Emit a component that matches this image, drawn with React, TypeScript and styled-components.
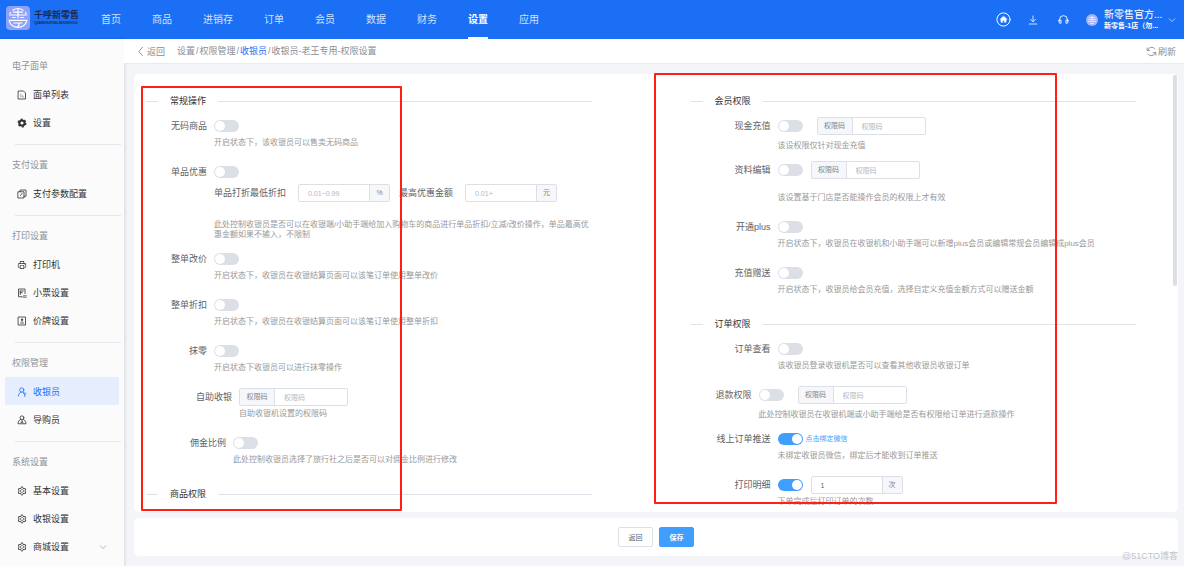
import React, { useId } from "react";
import styled, { createGlobalStyle, css } from "styled-components";
import { AiOutlineSetting, AiOutlinePrinter } from "react-icons/ai";

const GlobalStyle = createGlobalStyle`
  * { box-sizing: border-box; }
  body { margin: 0; }
  body, button, input {
    font-family: "Liberation Sans", "Noto Sans CJK SC", sans-serif;
  }
`;

const Shell = styled.div`
  position: relative;
  display: flex;
  flex-direction: column;
  height: 100vh;
  overflow: hidden;
  background: #f4f5f8;
  color: #606266;
  font-size: 9px;
  line-height: 14px;
`;

/* ---------- top bar ---------- */

const TopBar = styled.header`
  display: flex;
  align-items: center;
  flex: none;
  height: 39px;
  padding: 0 8px 0 6px;
  background: #1b6ff5;
  color: #fff;
`;

const Brand = styled.a`
  display: flex;
  align-items: center;
  gap: 4px;
  width: 95px;
  padding-bottom: 4px;
  color: #1d2a4d;
  text-decoration: none;
`;

const BrandText = styled.span`
  display: flex;
  flex-direction: column;
  font-weight: 700;
`;

const BrandName = styled.span`
  font-size: 9px;
  line-height: 10px;
`;

const BrandLatin = styled.span`
  font-size: 4px;
  line-height: 5px;
`;

const Nav = styled.nav`
  display: flex;
  flex: 1;
  gap: 31px;
  height: 100%;
`;

const NavLink = styled.a<{ $active?: boolean }>`
  display: flex;
  align-items: center;
  padding-top: 2px;
  border-bottom: 2px solid ${(p) => (p.$active ? "#fff" : "transparent")};
  color: ${(p) => (p.$active ? "#fff" : "#d3e2fd")};
  font-size: 10px;
  font-weight: ${(p) => (p.$active ? 700 : 400)};
  text-decoration: none;
`;

const Tools = styled.div`
  display: flex;
  align-items: center;
`;

const ToolButton = styled.button`
  display: flex;
  justify-content: center;
  width: 30px;
  padding: 0;
  border: 0;
  background: none;
  color: #fff;
`;

const Account = styled.button`
  display: flex;
  align-items: center;
  gap: 6px;
  margin-left: 8px;
  padding: 0;
  border: 0;
  background: none;
  color: #fff;
  text-align: left;
`;

const AccountText = styled.span`
  display: flex;
  flex-direction: column;
  width: 58px;
  white-space: nowrap;
`;

const AccountName = styled.span`
  font-size: 10px;
  line-height: 12px;
`;

const AccountShop = styled.span`
  font-size: 7px;
  font-weight: 700;
  line-height: 10px;
`;

/* ---------- sidebar ---------- */

const Body = styled.div`
  display: flex;
  flex: 1;
  min-height: 0;
`;

const Sidebar = styled.aside`
  flex: none;
  width: 124px;
  padding-top: 11px;
  overflow: hidden;
  background: #fbfbfb;
  box-shadow: 1px 0 3px rgba(0, 0, 0, 0.12);
`;

const Group = styled.section`
  &:not(:last-child)::after {
    content: "";
    display: block;
    height: 1px;
    margin: 8px 3px 4px 15px;
    background: #e6e7ea;
  }
`;

const GroupTitle = styled.h2`
  height: 30px;
  margin: 0;
  padding: 2px 0 0 12px;
  color: #909399;
  font-size: 9px;
  font-weight: 400;
  line-height: 28px;
`;

const MenuLink = styled.a<{ $active?: boolean }>`
  display: flex;
  align-items: center;
  gap: 6px;
  height: 28px;
  margin: 0 5px;
  padding: 1px 12px 0;
  border-radius: 2px;
  background: ${(p) => (p.$active ? "#e6edfc" : "transparent")};
  color: ${(p) => (p.$active ? "#1b6ff5" : "#303133")};
  text-decoration: none;

  & > span {
    flex: 1;
  }
  & > span + svg {
    color: #909399;
  }
`;

/* ---------- main ---------- */

const Main = styled.main`
  display: flex;
  flex: 1;
  flex-direction: column;
  min-width: 0;
`;

const CrumbBar = styled.div`
  display: flex;
  align-items: center;
  flex: none;
  height: 25px;
  padding: 0 8px 0 14px;
  border-bottom: 1px solid #e8eaee;
  background: #fff;
  color: #8a8d93;
`;

const PlainButton = styled.button<{ $gap?: number }>`
  display: flex;
  align-items: center;
  gap: ${(p) => p.$gap ?? 0}px;
  padding: 0;
  border: 0;
  background: none;
  color: inherit;
  font-size: 9px;
`;

const Crumbs = styled.nav`
  display: flex;
  flex: 1;
  gap: 1px;
  margin-left: 12px;
`;

const Crumb = styled.a<{ $strong?: boolean }>`
  color: ${(p) => (p.$strong ? "#1b6ff5" : "inherit")};
  text-decoration: none;
`;

const Content = styled.div`
  display: flex;
  flex: 1;
  flex-direction: column;
  gap: 6px;
  min-height: 0;
  padding: 10px 6px 10px 10px;
`;

const Card = styled.div`
  display: flex;
  flex: 1;
  min-height: 0;
  padding-bottom: 7px;
  border-radius: 5px;
  background: #fff;
`;

const Columns = styled.form`
  display: grid;
  flex: 1;
  grid-template-columns: 1fr 1fr;
  align-items: start;
  column-gap: 99px;
  padding: 13px 37px 0 12px;
  overflow-y: auto;
  scrollbar-width: none;
`;

const Column = styled.div`
  display: flex;
  flex-direction: column;
`;

const ScrollThumb = styled.div`
  flex: none;
  width: 4px;
  height: 49%;
  margin: 1px 1px 0 0;
  border-radius: 2px;
  background: #dddee0;
`;

const ActionBar = styled.div`
  display: flex;
  align-items: center;
  justify-content: center;
  flex: none;
  gap: 6px;
  height: 38px;
  border-radius: 5px;
  background: #fff;
`;

const ActionButton = styled.button<{ $primary?: boolean }>`
  width: 35px;
  height: 20px;
  padding: 0;
  border: 1px solid ${(p) => (p.$primary ? "#409eff" : "#dcdfe6")};
  border-radius: 2px;
  background: ${(p) => (p.$primary ? "#409eff" : "#fff")};
  color: ${(p) => (p.$primary ? "#fff" : "#606266")};
  font-size: 7px;
  font-weight: ${(p) => (p.$primary ? 700 : 400)};
`;

/* ---------- form parts ---------- */

const SectionTitle = styled.h3`
  display: flex;
  align-items: center;
  gap: 12px;
  height: 14px;
  margin: 7px 0 9px;
  color: #303133;
  font-size: 9px;
  font-weight: 400;

  &::before,
  &::after {
    content: "";
    width: 12px;
    height: 1px;
    background: #dfe2e8;
  }
  &::after {
    flex: 1;
  }
`;

const Item = styled.div<{ $label: number; $tight?: boolean }>`
  display: grid;
  grid-template-columns: ${(p) => p.$label}px 1fr;
  margin-bottom: ${(p) => (p.$tight ? 10 : 15)}px;
`;

const ItemLabel = styled.label`
  padding-right: 7px;
  line-height: 18px;
  text-align: right;
  white-space: nowrap;
`;

const Controls = styled.div<{ $gap?: number }>`
  display: flex;
  align-items: center;
  gap: ${(p) => p.$gap ?? 0}px;
  height: 18px;
`;

const Hint = styled.p<{ $top?: number }>`
  grid-column: 2;
  margin: ${(p) => p.$top ?? 3}px 0 0;
  color: #999;
  font-size: 8px;
  line-height: 10px;
`;

const Switch = styled.input.attrs({ type: "checkbox", role: "switch" })`
  appearance: none;
  display: flex;
  justify-content: flex-start;
  width: 25px;
  height: 12px;
  margin: 0;
  padding: 1px;
  border-radius: 6px;
  background: #dcdfe6;

  &::before {
    content: "";
    width: 10px;
    height: 10px;
    border-radius: 50%;
    background: #fff;
  }
  &:checked {
    justify-content: flex-end;
    background: #409eff;
  }
`;

const SubRow = styled.div`
  display: flex;
  grid-column: 2;
  align-items: center;
  gap: 12px;
  height: 18px;
  margin-top: 3px;
  white-space: nowrap;

  & > :nth-child(3) {
    margin-left: -3px;
  }
`;

const Field = styled.span`
  display: flex;
  height: 18px;
  overflow: hidden;
  border: 1px solid #dcdfe6;
  border-radius: 2px;
  background: #fff;
`;

const addonEdge = {
  start: css`
    width: 35px;
    border-right: 1px solid #dcdfe6;
  `,
  end: css`
    width: 20px;
    border-left: 1px solid #dcdfe6;
  `,
};

const Addon = styled.span<{ $side: "start" | "end" }>`
  display: flex;
  align-items: center;
  justify-content: center;
  background: #f5f7fa;
  color: #80848c;
  font-size: 7px;
  ${(p) => addonEdge[p.$side]}
`;

const TextInput = styled.input<{ $short?: boolean }>`
  width: ${(p) => (p.$short ? 70 : 72)}px;
  padding: 0 9px;
  border: 0;
  outline: 0;
  background: none;
  color: #606266;
  font-size: 7px;

  &::placeholder {
    color: #b4b8c0;
  }
`;

const BindLink = styled.a`
  margin-left: 3px;
  color: #409eff;
  font-size: 7px;
  text-decoration: none;
`;

/* ---------- annotations ---------- */

const Marker = styled.div`
  position: absolute;
  border: 2px solid #ff1f14;
  border-radius: 1px;
  pointer-events: none;
`;

const LeftMarker = styled(Marker)`
  top: 86px;
  left: 141px;
  width: 261px;
  height: 425px;
`;

const RightMarker = styled(Marker)`
  top: 73px;
  left: 654px;
  width: 403px;
  height: 431px;
`;

const Watermark = styled.div`
  position: absolute;
  right: 6px;
  bottom: 3px;
  color: #c3c4c8;
  font-size: 9px;
`;

/* ---------- icons ---------- */

const Svg = ({ size = 10, children }: { size?: number; children: React.ReactNode }) => (
  <svg
    width={size}
    height={size}
    viewBox="0 0 20 20"
    fill="none"
    stroke="currentColor"
    strokeWidth="1.6"
    strokeLinecap="round"
    strokeLinejoin="round"
    aria-hidden="true"
  >
    {children}
  </svg>
);

const LogoMark = () => (
  <svg width="24" height="24" viewBox="0 0 24 24" fill="none" stroke="#fff" aria-hidden="true">
    <rect width="24" height="24" rx="4" fill="#8ea2fb" stroke="none" />
    <path
      d="M6.500 4.500A9.400 9.400 0 0 1 17.500 4.500M3.500 8.200A9.400 9.400 0 0 1 5 6M20.500 8.200A9.400 9.400 0 0 0 19 6M3 14.500a9.400 9.400 0 0 0 9 6.900 9.400 9.400 0 0 0 9-6.900"
      strokeWidth="1.100"
    />
    <path
      d="M7 6.200h10M3.200 9h17.600M12 3.200v9.300M6.200 11.500h3.600M14.200 11.500h3.600M2.800 14.300h18.400M7.500 17h9M12.500 17c1 1.800.2 3.200-1.500 4.200"
      strokeWidth="1.200"
    />
  </svg>
);

const DocIcon = () => (
  <Svg>
    <path d="M3 2h10l4 4v12H3z" />
    <path d="M7.500 8v6M10.500 11v3h3" strokeWidth="1.100" strokeOpacity="0.7" />
  </Svg>
);
const SolidGear = () => (
  <svg width="10" height="10" viewBox="0 0 20 20" fill="none" stroke="currentColor" aria-hidden="true">
    <circle cx="10" cy="10" r="5.200" strokeWidth="4" />
    <circle cx="10" cy="10" r="7.600" strokeWidth="2.600" strokeDasharray="4.200 3.760" />
  </svg>
);
const CopyIcon = () => (
  <Svg>
    <path d="M2.500 5.500h11.500V18H2.500z M6 5.500V2h12v12.500h-4" />
    <path d="M10.500 8.500L7 13" />
  </Svg>
);
const TicketIcon = () => (
  <Svg>
    <path d="M16 11V2H3v15.500h8M6.500 6h6M6.500 9.500h4M6.500 6v7" />
    <path d="M13 15.500h5.500M13 18.500h5.500" strokeWidth="1.400" />
  </Svg>
);
const PriceIcon = () => (
  <Svg>
    <path d="M3 2h14v16H3z M10 6v5M7 14h6" />
    <circle cx="10" cy="7.500" r="1.200" fill="currentColor" />
  </Svg>
);
const CashierIcon = () => (
  <Svg>
    <circle cx="9.500" cy="6" r="4.200" />
    <path d="M2.500 18c.3-4 2.700-7 6-7.500M12 10.500c1.500.3 2.500.8 3.500 1.500M13 12.500l2.500 3 2.500-3M15.500 15.500V19" />
  </Svg>
);
const GuideIcon = () => (
  <Svg>
    <circle cx="10" cy="5.500" r="3.800" />
    <path d="M7 9c-3 1.500-4.500 4-5 8.500h16c-.5-4.500-2-7-5-8.500M10 10.500v4M8 14.500h4" />
  </Svg>
);
const ChevronDown = () => (
  <Svg size={8}>
    <path d="M3 7l7 7 7-7" />
  </Svg>
);
const ChevronLeft = () => (
  <svg width="9" height="11" viewBox="0 0 18 22" fill="none" stroke="currentColor" strokeWidth="1.800" aria-hidden="true">
    <path d="M9.500 2L1.500 11l8 9" />
  </svg>
);
const HomeIcon = () => (
  <Svg size={15}>
    <circle cx="10" cy="10" r="8.800" strokeWidth="1.300" />
    <path
      d="M10 5.500l-4.800 4.300h1.300v4h2.400v-2.600h2.200v2.600h2.400v-4h1.300z"
      fill="currentColor"
      strokeWidth="0.500"
    />
  </Svg>
);
const DownloadIcon = () => (
  <Svg size={10}>
    <path d="M10 2v11M5 8.500l5 5 5-5M2.500 18h15" />
  </Svg>
);
const HeadsetIcon = () => (
  <Svg size={11}>
    <path d="M3 13V10a7 7 0 0 1 14 0v3" />
    <path d="M2 11h3.500v6H4a2 2 0 0 1-2-2zM18 11h-3.500v6H16a2 2 0 0 0 2-2z" />
  </Svg>
);
const RefreshIcon = () => (
  <Svg size={11}>
    <path d="M3 8a7.500 7.500 0 0 1 13.500-2.500M17 12a7.500 7.500 0 0 1-13.500 2.500" />
    <path d="M2 3.500V8h4.500M18 16.500V12h-4.500" />
  </Svg>
);
const Avatar = () => (
  <svg width="12" height="12" viewBox="0 0 24 24" stroke="#fff" fill="none" aria-hidden="true">
    <circle cx="12" cy="12" r="12" fill="#a9b3f6" stroke="none" />
    <path d="M6 7h12M4 11h16M12 4v11M4 15h16M8 19h8" strokeWidth="1.600" strokeOpacity="0.800" />
  </svg>
);

/* ---------- data ---------- */

const navItems = ["首页", "商品", "进销存", "订单", "会员", "数据", "财务", "设置", "应用"];

type MenuEntry = { text: string; icon: React.ReactNode; active?: boolean; expandable?: boolean };

const gear = <AiOutlineSetting size={10} />;

const menu: { title: string; items: MenuEntry[] }[] = [
  {
    title: "电子面单",
    items: [
      { text: "面单列表", icon: <DocIcon /> },
      { text: "设置", icon: <SolidGear /> },
    ],
  },
  { title: "支付设置", items: [{ text: "支付参数配置", icon: <CopyIcon /> }] },
  {
    title: "打印设置",
    items: [
      { text: "打印机", icon: <AiOutlinePrinter size={10} /> },
      { text: "小票设置", icon: <TicketIcon /> },
      { text: "价牌设置", icon: <PriceIcon /> },
    ],
  },
  {
    title: "权限管理",
    items: [
      { text: "收银员", icon: <CashierIcon />, active: true },
      { text: "导购员", icon: <GuideIcon /> },
    ],
  },
  {
    title: "系统设置",
    items: [
      { text: "基本设置", icon: gear },
      { text: "收银设置", icon: gear },
      { text: "商城设置", icon: gear, expandable: true },
    ],
  },
];

/* ---------- composed pieces ---------- */

const CodeField = ({ id }: { id?: string }) => (
  <Field>
    <Addon $side="start">权限码</Addon>
    <TextInput id={id} placeholder="权限码" aria-label={id ? undefined : "权限码"} />
  </Field>
);

type SettingProps = {
  label: string;
  hint: string;
  labelWidth: number;
  hintTop?: number;
  tight?: boolean;
  gap?: number;
  on?: boolean;
  children?: React.ReactNode;
  below?: React.ReactNode;
};

const Setting = ({ label, hint, labelWidth, hintTop, tight, gap, on, children, below }: SettingProps) => {
  const id = useId();
  return (
    <Item $label={labelWidth} $tight={tight}>
      <ItemLabel htmlFor={id}>{label}</ItemLabel>
      <Controls $gap={gap}>
        <Switch id={id} defaultChecked={on} />
        {children}
      </Controls>
      {below}
      <Hint $top={hintTop}>{hint}</Hint>
    </Item>
  );
};

export default function App() {
  return (
    <Shell>
      <GlobalStyle />
      <TopBar>
        <Brand href="#">
          <LogoMark />
          <BrandText>
            <BrandName>千呼新零售</BrandName>
            <BrandLatin>QIANHUXINLINGSHOU</BrandLatin>
          </BrandText>
        </Brand>
        <Nav>
          {navItems.map((n) => (
            <NavLink key={n} href="#" $active={n === "设置"}>
              {n}
            </NavLink>
          ))}
        </Nav>
        <Tools>
          <ToolButton type="button" aria-label="主页"><HomeIcon /></ToolButton>
          <ToolButton type="button" aria-label="下载"><DownloadIcon /></ToolButton>
          <ToolButton type="button" aria-label="客服"><HeadsetIcon /></ToolButton>
          <Account type="button">
            <Avatar />
            <AccountText>
              <AccountName>新零售官方...</AccountName>
              <AccountShop>新零售-1店（勿...</AccountShop>
            </AccountText>
            <ChevronDown />
          </Account>
        </Tools>
      </TopBar>

      <Body>
        <Sidebar>
          {menu.map((g) => (
            <Group key={g.title}>
              <GroupTitle>{g.title}</GroupTitle>
              {g.items.map((m) => (
                <MenuLink key={m.text} href="#" $active={m.active}>
                  {m.icon}
                  <span>{m.text}</span>
                  {m.expandable && <ChevronDown />}
                </MenuLink>
              ))}
            </Group>
          ))}
        </Sidebar>

        <Main>
          <CrumbBar>
            <PlainButton type="button">
              <ChevronLeft />
              返回
            </PlainButton>
            <Crumbs>
              <Crumb href="#">设置</Crumb>
              <span>/</span>
              <Crumb href="#">权限管理</Crumb>
              <span>/</span>
              <Crumb href="#" $strong>收银员</Crumb>
              <span>/</span>
              <span>收银员-老王专用-权限设置</span>
            </Crumbs>
            <PlainButton type="button" $gap={1}>
              <RefreshIcon />
              刷新
            </PlainButton>
          </CrumbBar>

          <Content>
            <Card>
              <Columns>
                <Column>
                  <SectionTitle>常规操作</SectionTitle>
                  <Setting labelWidth={68} label="无码商品" hint="开启状态下，该收银员可以售卖无码商品" />
                  <Setting
                    labelWidth={68}
                    label="单品优惠"
                    hint="此处控制收银员是否可以在收银端/小助手端给加入购物车的商品进行单品折扣/立减/改价操作，单品最高优惠金额如果不输入，不限制"
                    hintTop={18}
                    tight
                    below={
                      <SubRow>
                        <label htmlFor="min-discount">单品打折最低折扣</label>
                        <Field>
                          <TextInput id="min-discount" placeholder="0.01~0.99" $short />
                          <Addon $side="end">%</Addon>
                        </Field>
                        <label htmlFor="max-off">最高优惠金额</label>
                        <Field>
                          <TextInput id="max-off" placeholder="0.01+" $short />
                          <Addon $side="end">元</Addon>
                        </Field>
                      </SubRow>
                    }
                  />
                  <Setting labelWidth={68} label="整单改价" hint="开启状态下，收银员在收银结算页面可以该笔订单使用整单改价" />
                  <Setting labelWidth={68} label="整单折扣" hint="开启状态下，收银员在收银结算页面可以该笔订单使用整单折扣" />
                  <Setting labelWidth={68} label="抹零" hint="开启状态下收银员可以进行抹零操作" />
                  <Item $label={93}>
                    <ItemLabel htmlFor="self-code">自助收银</ItemLabel>
                    <Controls>
                      <CodeField id="self-code" />
                    </Controls>
                    <Hint>自助收银机设置的权限码</Hint>
                  </Item>
                  <Setting labelWidth={87} label="佣金比例" hint="此处控制收银员选择了旅行社之后是否可以对佣金比例进行修改" />
                  <SectionTitle>商品权限</SectionTitle>
                </Column>

                <Column>
                  <SectionTitle>会员权限</SectionTitle>
                  <Setting labelWidth={87} label="现金充值" hint="该设权限仅针对现金充值" hintTop={6} gap={14} tight>
                    <CodeField />
                  </Setting>
                  <Setting labelWidth={87} label="资料编辑" hint="该设置基于门店是否能操作会员的权限上才有效" hintTop={14} gap={8}>
                    <CodeField />
                  </Setting>
                  <Setting labelWidth={87} label="开通plus" hint="开启状态下，收银员在收银机和小助手端可以新增plus会员或编辑常规会员编辑成plus会员" />
                  <Setting labelWidth={87} label="充值赠送" hint="开启状态下，收银员给会员充值，选择自定义充值金额方式可以赠送金额" />
                  <SectionTitle>订单权限</SectionTitle>
                  <Setting labelWidth={87} label="订单查看" hint="该收银员登录收银机是否可以查看其他收银员收银订单" />
                  <Setting labelWidth={68} label="退款权限" hint="此处控制收银员在收银机端或小助手端给是否有权限给订单进行退款操作" hintTop={6} gap={14} tight>
                    <CodeField />
                  </Setting>
                  <Setting labelWidth={87} label="线上订单推送" hint="未绑定收银员微信，绑定后才能收到订单推送" on>
                    <BindLink href="#">点击绑定微信</BindLink>
                  </Setting>
                  <Setting labelWidth={87} label="打印明细" hint="下单完成后打印订单的次数" gap={8} on>
                    <Field>
                      <TextInput defaultValue="1" aria-label="打印次数" $short />
                      <Addon $side="end">次</Addon>
                    </Field>
                  </Setting>
                </Column>
              </Columns>
              <ScrollThumb />
            </Card>
            <ActionBar>
              <ActionButton type="button">返回</ActionButton>
              <ActionButton type="button" $primary>保存</ActionButton>
            </ActionBar>
          </Content>
        </Main>
      </Body>

      <LeftMarker />
      <RightMarker />
      <Watermark>@51CTO博客</Watermark>
    </Shell>
  );
}
